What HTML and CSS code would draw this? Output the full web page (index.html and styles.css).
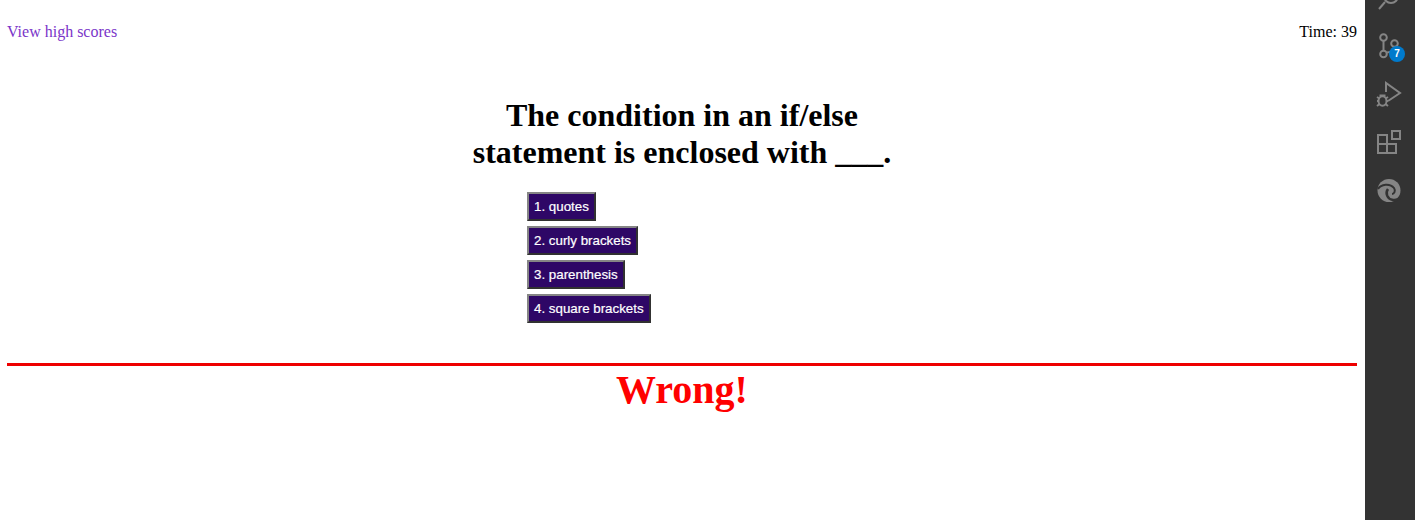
FILE: index.html
```html
<!DOCTYPE html>
<html lang="en">
<head>
    <meta charset="UTF-8">
    <meta name="viewport" content="width=device-width, initial-scale=1.0">
    <title>Code Quiz</title>
    <link rel="stylesheet" href="styles.css">
</head>
<body>
    <div class="page">
        <header class="topbar">
            <a class="scores-link" href="#">View high scores</a>
            <span class="timer">Time: 39</span>
        </header>
        <main class="quiz">
            <h1 class="question">The condition in an if/else statement is enclosed with ___.</h1>
            <div class="choices">
                <button class="choice">1. quotes</button>
                <button class="choice">2. curly brackets</button>
                <button class="choice">3. parenthesis</button>
                <button class="choice">4. square brackets</button>
            </div>
        </main>
        <div class="result">
            <h2 class="result-text">Wrong!</h2>
        </div>
    </div>
    <aside class="activity-bar">
        <svg class="search-icon" width="50" height="10" viewBox="0 0 50 10" fill="none" stroke="#858585" stroke-width="2">
            <circle cx="26" cy="-4" r="7"/>
            <path d="M20 2 L14 9"/>
        </svg>
        <div class="activity-item">
            <svg width="50" height="48" viewBox="0 0 50 48" fill="none" stroke="#858585" stroke-width="2">
                <circle cx="18.500" cy="5.500" r="3.300"/>
                <circle cx="18.500" cy="22" r="3.300"/>
                <circle cx="29.500" cy="11.500" r="3.300"/>
                <path d="M18.500 9 V19 M29.500 15 C29.500 18 26 20 22 20.500"/>
            </svg>
            <span class="badge">7</span>
        </div>
        <div class="activity-item">
            <svg width="50" height="48" viewBox="0 0 50 48" fill="none" stroke="#858585" stroke-width="2">
                <path d="M21 12 V3 L35 13 L23 21"/>
                <ellipse cx="17.500" cy="21" rx="4" ry="4.800"/>
                <path d="M14.500 15.500 H20.500 M12 17 L14.500 18.500 M23 17 L20.500 18.500 M12 21 H14 M21 21 H23 M12 26 L14.500 24 M23 26 L20.500 24"/>
            </svg>
        </div>
        <div class="activity-item">
            <svg width="50" height="48" viewBox="0 0 50 48" fill="none" stroke="#858585" stroke-width="2">
                <rect x="13" y="7" width="9" height="9"/>
                <rect x="13" y="16" width="9" height="9"/>
                <rect x="22" y="16" width="9" height="9"/>
                <rect x="27" y="3" width="8" height="8"/>
            </svg>
        </div>
        <div class="activity-item">
            <svg width="50" height="48" viewBox="0 0 50 48" fill="none">
                <circle cx="24" cy="14.500" r="11.500" fill="#858585"/>
                <path stroke="#333333" stroke-width="2" d="M13 13 C16 8 25 7 29 12 C31 15 29 18 27 18"/>
                <path stroke="#333333" stroke-width="2.500" d="M23 13 C20 17 22 23 28 24 C31 24.500 34 23 36 20"/>
            </svg>
        </div>
    </aside>
</body>
</html>
```

FILE: styles.css
```css
body { margin: 0; display: flex; height: 520px; overflow: hidden; background: white; font-family: "Liberation Serif", "Times New Roman", serif; font-size: 16px; color: black; }
.page { flex: 1; min-width: 0; padding: 0 8px 0 7px; }
.topbar { display: flex; justify-content: space-between; padding-top: 23px; line-height: 18px; }
.scores-link { color: #7a35c9; text-decoration: none; }
.quiz { width: 420px; margin: 56px auto 0; }
.question { margin: 0; font-size: 32px; line-height: 37px; text-align: center; }
.choices { display: flex; flex-direction: column; align-items: flex-start; gap: 5px; margin: 21px 0 0 55px; }
.choice { height: 29px; padding: 0 5px; font-family: "Liberation Sans", Arial, sans-serif; font-size: 13.33px; color: white; background: #2e0766; border: 2px outset #858585; -webkit-text-stroke: 0.2px white; }
.result { margin-top: 40px; border-top: 3px solid #ee0000; }
.result-text { margin: 0; font-size: 40px; line-height: 48px; font-weight: bold; color: red; text-align: center; }
.activity-bar { flex: 0 0 50px; display: flex; flex-direction: column; background: #333333; }
.search-icon { display: block; }
.activity-item { position: relative; height: 48px; }
.activity-item svg { display: block; margin-top: 22px; margin-bottom: -22px; }
.badge { position: absolute; left: 24px; top: 36px; width: 16px; height: 16px; border-radius: 50%; background: #007acc; color: white; font-family: "Liberation Sans", Arial, sans-serif; font-size: 10px; font-weight: bold; line-height: 16px; text-align: center; }
```
